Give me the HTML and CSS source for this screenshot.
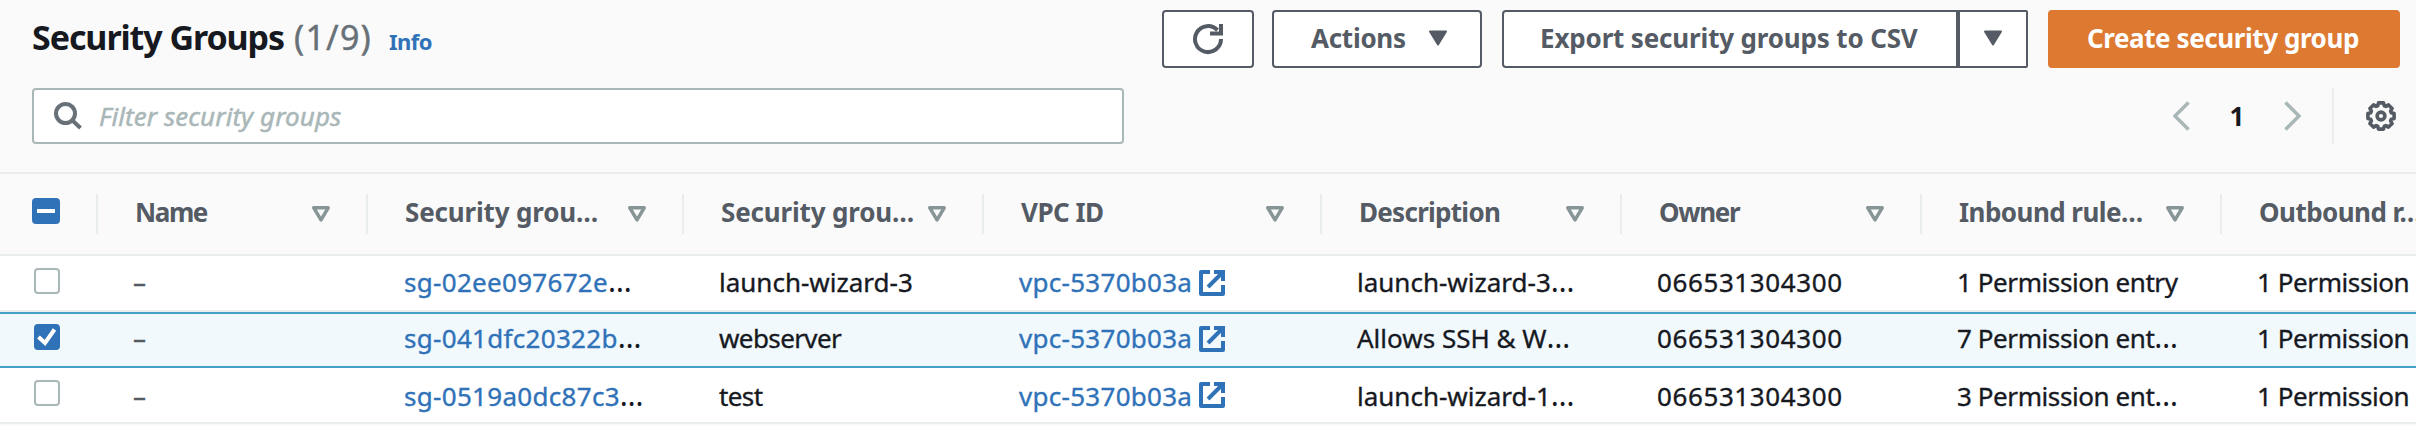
FILE: index.html
```
<!DOCTYPE html>
<html lang="en">
<head>
<meta charset="utf-8">
<title>Security Groups</title>
<link rel="stylesheet" href="styles.css">
</head>
<body>
<svg class="defs" aria-hidden="true">
  <symbol id="sort" viewBox="0 0 18 16"><path d="M1.800 1.800h14.400L9 13.800z" fill="none" stroke="#879596" stroke-width="3.500" stroke-linejoin="round"/></symbol>
  <symbol id="caret" viewBox="0 0 20 16"><path d="M2 1.5h16L10 14.5z" fill="#545b64" stroke="#545b64" stroke-width="2" stroke-linejoin="round"/></symbol>
  <symbol id="external" viewBox="0 0 26 26"><path d="M11 2H2v22h22v-9" fill="none" stroke="#3072b8" stroke-width="4" stroke-linejoin="round"/><path d="M15 2h9v9M23 3L9 17" fill="none" stroke="#3072b8" stroke-width="4"/></symbol>
</svg>
<header class="top">
  <div class="title-row">
    <h1 class="title">Security Groups</h1>
    <span class="count">(1/9)</span>
    <a class="info">Info</a>
    <div class="actions">
      <button class="btn refresh"><svg width="32" height="32" viewBox="0 0 32 32" fill="none" stroke="#545b64" stroke-width="4"><path d="M29 16A13 13 0 1 1 25.5 7.2M29 1v9M18 10.5h13"/></svg></button>
      <button class="btn menu"><span class="t-actions">Actions</span><svg width="20" height="16"><use href="#caret"/></svg></button>
      <div class="split">
        <button class="btn export"><span class="t-export">Export security groups to CSV</span></button>
        <button class="btn drop"><svg width="20" height="16"><use href="#caret"/></svg></button>
      </div>
      <button class="btn primary"><span class="t-create">Create security group</span></button>
    </div>
  </div>
  <div class="filter-row">
    <div class="search">
      <svg width="28" height="28" viewBox="0 0 28 28" fill="none" stroke="#687078" stroke-width="4"><circle cx="11.5" cy="11.5" r="9.5"/><path d="M18.5 18.5l8 7.5"/></svg>
      <span class="placeholder">Filter security groups</span>
    </div>
    <div class="pager">
      <svg width="17" height="30" viewBox="0 0 17 30" fill="none" stroke="#aab7b8" stroke-width="3.500"><path d="M15.5 1.5L2 15l13.500 13.500"/></svg>
      <span class="page">1</span>
      <svg width="17" height="30" viewBox="0 0 17 30" fill="none" stroke="#aab7b8" stroke-width="3.500"><path d="M1.500 1.500L15 15 1.500 28.500"/></svg>
    </div>
    <div class="settings">
      <svg width="30" height="30" viewBox="0 0 30 30" fill="none" stroke="#545b64" stroke-linejoin="round"><path stroke-width="3.600" d="M12.500 1.900h5l.8 2.900 1.500.6 2.700-1.500 3.600 3.600-1.500 2.700.6 1.500 2.900.8v5l-2.900.8-.6 1.500 1.500 2.700-3.600 3.600-2.700-1.500-1.500.6-.8 2.900h-5l-.8-2.900-1.500-.6-2.700 1.500-3.600-3.600 1.500-2.700-.6-1.500-2.900-.8v-5l2.900-.8.6-1.500-1.500-2.700 3.600-3.600 2.700 1.500 1.500-.6z"/><circle cx="15" cy="15" r="3.900" stroke-width="3.600"/></svg>
    </div>
  </div>
</header>
<main class="table">
  <div class="row head">
    <div class="pick"><span class="box mixed"><svg width="28" height="26" viewBox="0 0 28 26"><path d="M5 13h18" stroke="#fff" stroke-width="4"/></svg></span></div>
    <div class="th"><span class="h-name">Name</span><svg width="18" height="16"><use href="#sort"/></svg></div>
    <div class="th"><span class="h-sg">Security grou…</span><svg width="18" height="16"><use href="#sort"/></svg></div>
    <div class="th"><span class="h-sg">Security grou…</span><svg width="18" height="16"><use href="#sort"/></svg></div>
    <div class="th"><span class="h-vpc">VPC ID</span><svg width="18" height="16"><use href="#sort"/></svg></div>
    <div class="th"><span class="h-desc">Description</span><svg width="18" height="16"><use href="#sort"/></svg></div>
    <div class="th"><span class="h-owner">Owner</span><svg width="18" height="16"><use href="#sort"/></svg></div>
    <div class="th"><span class="h-rule">Inbound rule…</span><svg width="18" height="16"><use href="#sort"/></svg></div>
    <div class="th"><span class="h-rule">Outbound r…</span></div>
  </div>
  <div class="row">
    <div class="pick"><span class="box"></span></div>
    <div class="td dash">–</div>
    <div class="td id"><a>sg-02ee097672e</a><span class="dots">…</span></div>
    <div class="td">launch-wizard-3</div>
    <div class="td vpc"><a>vpc-5370b03a</a><svg width="26" height="26"><use href="#external"/></svg></div>
    <div class="td">launch-wizard-3<span class="dots">…</span></div>
    <div class="td owner">066531304300</div>
    <div class="td perm">1 Permission entry</div>
    <div class="td perm">1 Permission</div>
  </div>
  <div class="row selected">
    <div class="pick"><span class="box checked"><svg width="26" height="26" viewBox="0 0 26 26"><path d="M4.500 13l6.500 6L20.500 5.500" fill="none" stroke="#fff" stroke-width="4"/></svg></span></div>
    <div class="td dash">–</div>
    <div class="td id"><a>sg-041dfc20322b</a><span class="dots">…</span></div>
    <div class="td web">webserver</div>
    <div class="td vpc"><a>vpc-5370b03a</a><svg width="26" height="26"><use href="#external"/></svg></div>
    <div class="td">Allows SSH &amp; W<span class="dots">…</span></div>
    <div class="td owner">066531304300</div>
    <div class="td perm">7 Permission ent<span class="dots">…</span></div>
    <div class="td perm">1 Permission</div>
  </div>
  <div class="row last">
    <div class="pick"><span class="box"></span></div>
    <div class="td dash">–</div>
    <div class="td id"><a>sg-0519a0dc87c3</a><span class="dots">…</span></div>
    <div class="td web">test</div>
    <div class="td vpc"><a>vpc-5370b03a</a><svg width="26" height="26"><use href="#external"/></svg></div>
    <div class="td">launch-wizard-1<span class="dots">…</span></div>
    <div class="td owner">066531304300</div>
    <div class="td perm">3 Permission ent<span class="dots">…</span></div>
    <div class="td perm">1 Permission</div>
  </div>
</main>
</body>
</html>
```
FILE: styles.css
```
* { box-sizing: border-box; }
body {
  margin: 0;
  width: 2416px;
  height: 426px;
  overflow: hidden;
  background: #fafafa;
  color: #16191f;
  font: 26px/36px "Noto Sans", "Open Sans", sans-serif;
}
svg { display: block; flex: none; }
.defs { display: none; }

.top { height: 174px; padding: 10px 16px 0 32px; border-bottom: 2px solid #eaeded; }
.title-row { display: flex; height: 58px; }
.title { margin: 0; font-size: 34px; line-height: 54px; letter-spacing: -1.07px; white-space: nowrap; width: 262px; }
.count { font-size: 34px; line-height: 54px; letter-spacing: 1.2px; color: #687078; width: 95px; -webkit-text-stroke: .4px; }
.info { font-size: 22px; line-height: 62px; font-weight: 700; letter-spacing: -.5px; color: #3072b8; }

.actions { display: flex; margin-left: auto; }
.btn {
  display: flex;
  align-items: center;
  height: 58px;
  padding: 0 0 2px;
  border: 2px solid #545b64;
  border-radius: 4px;
  background: #fff;
  color: #545b64;
  font: inherit;
  font-weight: 700;
  white-space: nowrap;
}
.refresh { width: 92px; padding: 0 0 0 28px; margin-right: 18px; }
.menu { width: 210px; padding-left: 37px; margin-right: 20px; }
.menu span { width: 117px; text-align: left; }
.split { display: flex; margin-right: 20px; }
.export { width: 456px; padding-left: 36px; border-radius: 4px 0 0 4px; }
.drop { width: 70px; padding-left: 23px; border-radius: 0 2px 2px 0; }
.primary { width: 352px; padding-left: 37px; background: #dd7931; border-color: #dd7931; color: #fff; }
.t-actions { letter-spacing: -.27px; }
.t-export { letter-spacing: -.16px; }
.t-create { letter-spacing: -.42px; }

.filter-row { display: flex; height: 56px; margin-top: 20px; }
.search {
  display: flex;
  align-items: center;
  width: 1092px;
  padding-left: 20px;
  background: #fff;
  border: 2px solid #aab7b8;
  border-radius: 4px;
}
.placeholder { margin-left: 17px; font-style: italic; color: #aab7b8; letter-spacing: .06px; -webkit-text-stroke: .5px; }
.pager { display: flex; align-items: center; margin-left: auto; width: 159px; }
.page { width: 94px; text-align: center; font-weight: 700; }
.settings { display: flex; align-items: center; width: 68px; padding-left: 32px; border-left: 2px solid #eaeded; }

.row {
  display: grid;
  grid-template-columns: 96px 270px 316px 300px 338px 300px 300px 300px 300px;
  height: 56px;
  background: #fff;
  border-bottom: 2px solid #eaeded;
  white-space: nowrap;
}
.head { height: 82px; background: #fafafa; }
.selected { background: #f2f9fd; border-bottom: 0; box-shadow: inset 0 2px #44a0c8, inset 0 -2px #44a0c8; }
.pick { padding: 12px 0 0 34px; }
.head .pick { padding: 24px 0 0 32px; }
.box { display: block; width: 26px; height: 26px; border: 2px solid #aab7b8; border-radius: 4px; background: #fff; }
.box.checked, .box.mixed { border: 0; background: #3072b8; }
.box.mixed { width: 28px; }

.th {
  display: flex;
  align-items: center;
  justify-content: space-between;
  height: 40px;
  margin-top: 20px;
  padding: 0 36px 4px 37px;
  border-left: 2px solid #eaeded;
  color: #545b64;
  font-weight: 700;
}
.th svg { margin-top: 3px; }
.h-name { letter-spacing: -1.4px; }
.h-sg { letter-spacing: -.16px; }
.h-vpc { letter-spacing: -.52px; }
.h-desc { letter-spacing: -.72px; }
.h-owner { letter-spacing: -1.3px; }
.h-rule { letter-spacing: -.54px; }

.td { padding: 8px 0 0 37px; -webkit-text-stroke: .35px; }
.last .td { padding-top: 10px; }
.td a { color: #3072b8; }
.dots { font-size: 30px; line-height: 1px; -webkit-text-stroke: 0; }
.dash { color: #545b64; }
.id { letter-spacing: .3px; padding-left: 38px; }
.web { letter-spacing: -.6px; }
.vpc { display: flex; letter-spacing: .28px; }
.vpc svg { margin: 6px 0 0 7px; }
.last .vpc svg { margin-top: 4px; }
.owner { letter-spacing: .6px; }
.perm { letter-spacing: -.42px; }
```
